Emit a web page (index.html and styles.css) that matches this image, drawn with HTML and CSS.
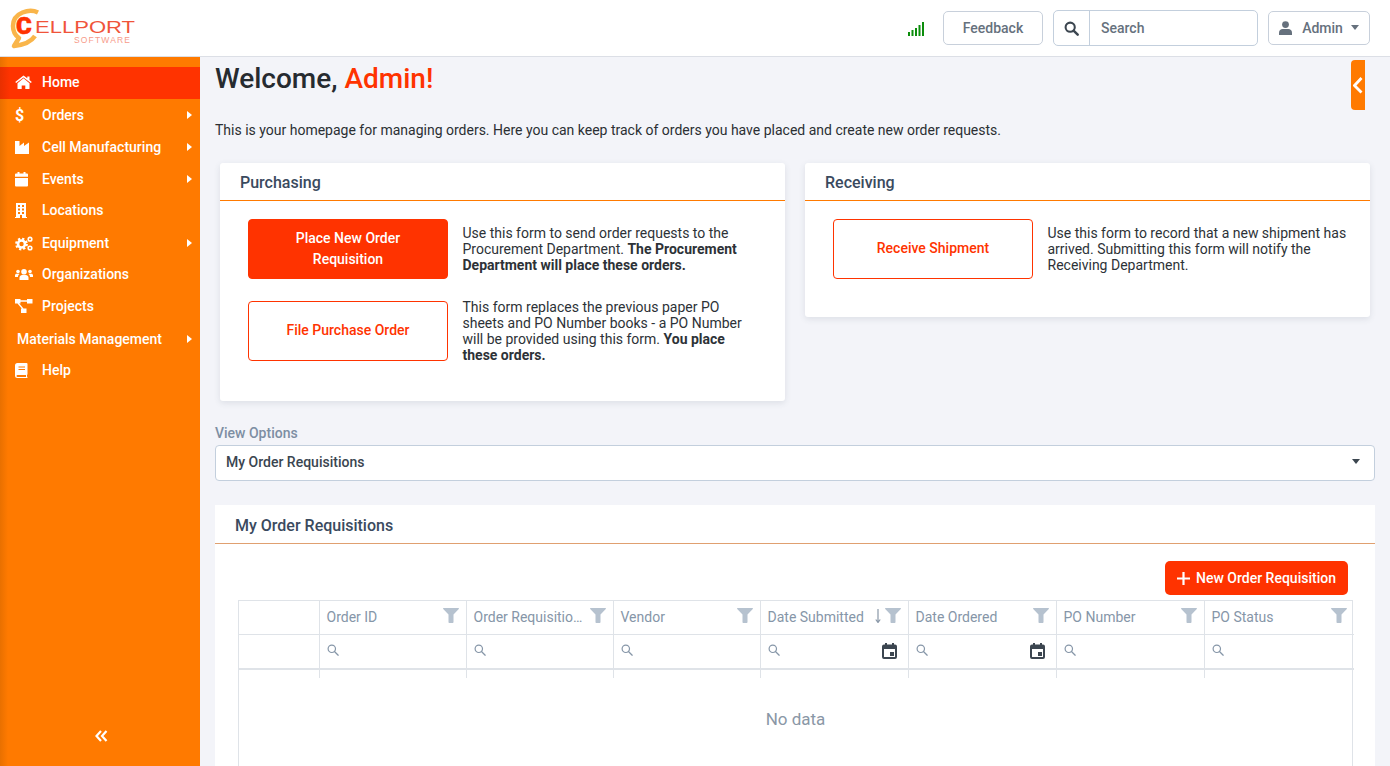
FILE: index.html
```html
<!DOCTYPE html>
<html lang="en">
<head>
<meta charset="utf-8">
<title>Cellport Software</title>
<link rel="stylesheet" href="styles.css">
</head>
<body>
<svg class="defs" aria-hidden="true">
  <defs>
    <symbol id="i-search" viewBox="0 0 16 16"><circle cx="6.600" cy="6.600" r="4.900" fill="none" stroke="currentColor" stroke-width="2.200"/><path d="M10.200 10.200l4.400 4.400" stroke="currentColor" stroke-width="2.600" stroke-linecap="round"/></symbol>
    <symbol id="i-search-thin" viewBox="0 0 13 13"><circle cx="5.200" cy="5.200" r="4" fill="none" stroke="currentColor" stroke-width="1.300"/><path d="M8.100 8.100l4 4" stroke="currentColor" stroke-width="1.400" stroke-linecap="round"/></symbol>
    <symbol id="i-filter" viewBox="0 0 16 15"><path d="M0.600 0h14.800c.5 0 .8.600.4 1L10.500 6.500V14c0 .6-.5 1-1 1h-3c-.6 0-1-.4-1-1V6.500L.2 1C-.2.600.1 0 .6 0z" fill="currentColor"/></symbol>
    <symbol id="i-cal" viewBox="0 0 15 16"><path fill-rule="evenodd" d="M3 0h2v1.500h5V0h2v1.500h1a2 2 0 0 1 2 2V14a2 2 0 0 1-2 2H2a2 2 0 0 1-2-2V3.500a2 2 0 0 1 2-2h1zM2 6v8h11V6zM8 9h4v4H8z" fill="currentColor"/></symbol>
  </defs>
</svg>
<header class="topbar">
  <svg class="logo" viewBox="0 0 135 46" width="135" height="46" role="img" aria-label="Cellport Software">
    <path d="M33 7.500C25 3.500 8 7 8 21c0 6 3 10 6 12l-5 8c9-1 17-4 21-10" fill="none" stroke="#f9b54a" stroke-width="4.500" stroke-linejoin="round"/>
    <text class="logo-c" x="11" y="29">C</text>
    <text class="logo-main" x="30" y="28" textLength="100" lengthAdjust="spacingAndGlyphs">ELLPORT</text>
    <text class="logo-sub" x="69" y="38" textLength="56" lengthAdjust="spacing">SOFTWARE</text>
  </svg>
  <div class="topbar-right">
    <svg class="signal" width="17" height="14" viewBox="0 0 17 14" aria-hidden="true"><path d="M0 10h2v4H0zM3.500 8h2v6h-2zM7 6h2v8H7zM10.500 3h2v11h-2zM14 0h2v14h-2z" fill="#0c8d0c"/></svg>
    <button class="btn-outline feedback">Feedback</button>
    <div class="searchbox">
      <span class="search-icon"><svg width="15" height="15"><use href="#i-search"/></svg></span>
      <span class="search-text">Search</span>
    </div>
    <button class="btn-outline admin">
      <svg class="admin-ico" width="13" height="14" viewBox="0 0 13 14"><circle cx="6.500" cy="3.600" r="3.400" fill="currentColor"/><path d="M0 14v-2.500C0 9.300 1.800 8 3.500 8h6c1.700 0 3.500 1.300 3.500 3.500V14z" fill="currentColor"/></svg>
      <span>Admin</span>
      <i class="caret"></i>
    </button>
  </div>
</header>
<div class="shell">
  <nav class="sidebar">
    <ul class="menu">
      <li class="item active"><svg class="ico" viewBox="0 0 18 15"><path d="M8.500 3.300L2.500 8.200V13.500a.6.600 0 0 0 .6.600h3.600v-3.600h3.600v3.600h3.600a.6.600 0 0 0 .6-.6V8.200z" fill="#fff"/><path d="M16.800 7L14.500 5V1.400h-2.200v1.800L8.500.6.200 7l1 1.100L8.500 2.400l7.300 5.700z" fill="#fff"/></svg><span>Home</span></li>
      <li class="item down"><span class="ico dollar">$</span><span>Orders</span><i class="arrow"></i></li>
      <li class="item"><svg class="ico" viewBox="0 0 18 15"><path d="M0 1h4.500v5L9 2.500V6l5-3.500V14H0z" fill="#fff"/></svg><span>Cell Manufacturing</span><i class="arrow"></i></li>
      <li class="item"><svg class="ico" viewBox="0 0 18 15"><path d="M2.500 0h2v1.500h4V0h2v1.500h1.500a1 1 0 0 1 1 1v2.300H0V2.500a1 1 0 0 1 1-1h1.500zM0 6h13v7.500a1 1 0 0 1-1 1H1a1 1 0 0 1-1-1z" fill="#fff"/></svg><span>Events</span><i class="arrow"></i></li>
      <li class="item up"><svg class="ico" viewBox="0 0 18 15"><path fill-rule="evenodd" d="M1 0h10v14h1v1H0v-1h1zM3 2v2h2V2zm4 0v2h2V2zM3 5.500v2h2v-2zm4 0v2h2v-2zM3 9v2h2V9zm4 0v2h2V9zM5 12v3h2v-3z" fill="#fff"/></svg><span>Locations</span></li>
      <li class="item down"><svg class="ico" viewBox="0 0 18 15"><circle cx="6.500" cy="8" r="3.500" fill="none" stroke="#fff" stroke-width="2.600"/><circle cx="6.500" cy="8" r="5.300" fill="none" stroke="#fff" stroke-width="2.200" stroke-dasharray="2.200 1.960"/><circle cx="15" cy="3.200" r="1.800" fill="none" stroke="#fff" stroke-width="1.600"/><circle cx="15" cy="12" r="1.800" fill="none" stroke="#fff" stroke-width="1.600"/></svg><span>Equipment</span><i class="arrow"></i></li>
      <li class="item up"><svg class="ico" viewBox="0 0 18 15"><circle cx="9" cy="4.800" r="2.800" fill="#fff"/><circle cx="3" cy="4.500" r="1.800" fill="#fff"/><circle cx="15" cy="4.500" r="1.800" fill="#fff"/><path d="M4.500 13v-2.200C4.500 9 6 8 7 8h4c1 0 2.500 1 2.500 2.800V13z" fill="#fff"/><path d="M0 10V8.300C0 7.300.8 6.700 1.500 6.700h2c.4 0 .7.100 1 .4C3.600 7.800 3 8.800 3 10zM18 10V8.300c0-1-.8-1.600-1.500-1.600h-2c-.4 0-.7.100-1 .4.900.7 1.500 1.700 1.500 2.900z" fill="#fff"/></svg><span>Organizations</span></li>
      <li class="item"><svg class="ico" viewBox="0 0 18 15"><path d="M0 0h5.500v4.500H0zM12 0h5.500v4.500H12zM6 9.500h5.500V14H6z" fill="#fff"/><path d="M4 2h9M3 4l5 6" stroke="#fff" stroke-width="1.300" fill="none"/></svg><span>Projects</span></li>
      <li class="item down plain"><span>Materials Management</span><i class="arrow"></i></li>
      <li class="item up"><svg class="ico" viewBox="0 0 18 15"><path fill-rule="evenodd" d="M2.500 0H11.500a1 1 0 0 1 1 1v10c0 .4-.2.700-.5.900v1.700c.3.200.5.500.5.900a.5.500 0 0 1-.5.500H2.500A2.500 2.500 0 0 1 0 12.500v-10A2.500 2.500 0 0 1 2.500 0zM3.500 3.500v1h6.500v-1zM3.500 6v1h6.500V6zM2.500 12a1 1 0 0 0 0 2h8.500v-2z" fill="#fff"/></svg><span>Help</span></li>
    </ul>
    <div class="collapse">
      <svg width="13" height="12" viewBox="0 0 13 12"><path d="M6 1L1.500 6 6 11M11.500 1L7 6l4.500 5" fill="none" stroke="#fff" stroke-width="2.200"/></svg>
    </div>
  </nav>
  <main class="content">
    <h1 class="welcome">Welcome, <em>Admin!</em></h1>
    <p class="intro">This is your homepage for managing orders. Here you can keep track of orders you have placed and create new order requests.</p>
    <div class="cards">
      <section class="card purchasing">
        <h2 class="card-title">Purchasing</h2>
        <div class="action-list">
          <div class="action">
            <button class="btn-action solid">Place New Order Requisition</button>
            <p>Use this form to send order requests to the Procurement Department. <b>The Procurement Department will place these orders.</b></p>
          </div>
          <div class="action">
            <button class="btn-action ghost">File Purchase Order</button>
            <p>This form replaces the previous paper PO sheets and PO Number books - a PO Number will be provided using this form. <b>You place these orders.</b></p>
          </div>
        </div>
      </section>
      <section class="card receiving">
        <h2 class="card-title">Receiving</h2>
        <div class="action-list">
          <div class="action">
            <button class="btn-action ghost">Receive Shipment</button>
            <p>Use this form to record that a new shipment has arrived. Submitting this form will notify the Receiving Department.</p>
          </div>
        </div>
      </section>
    </div>
    <label class="view-label">View Options</label>
    <div class="select"><span>My Order Requisitions</span><i class="caret dark"></i></div>
    <section class="panel">
      <h2 class="panel-title">My Order Requisitions</h2>
      <div class="panel-tools">
        <button class="btn-new"><svg width="13" height="13" viewBox="0 0 13 13"><path d="M6.500 0v13M0 6.500h13" stroke="#fff" stroke-width="2.200"/></svg>New Order Requisition</button>
      </div>
      <div class="grid">
        <div class="hcell"></div>
        <div class="hcell"><span class="hlabel">Order ID</span><svg class="filter"><use href="#i-filter"/></svg></div>
        <div class="hcell"><span class="hlabel">Order Requisitio…</span><svg class="filter"><use href="#i-filter"/></svg></div>
        <div class="hcell"><span class="hlabel">Vendor</span><svg class="filter"><use href="#i-filter"/></svg></div>
        <div class="hcell"><span class="hlabel">Date Submitted</span><svg class="sort" width="6" height="14" viewBox="0 0 6 14"><path d="M3 0v13M.8 10.500L3 13.500l2.200-3" fill="none" stroke="#8a98a8" stroke-width="1.200"/></svg><svg class="filter tight"><use href="#i-filter"/></svg></div>
        <div class="hcell"><span class="hlabel">Date Ordered</span><svg class="filter"><use href="#i-filter"/></svg></div>
        <div class="hcell"><span class="hlabel">PO Number</span><svg class="filter"><use href="#i-filter"/></svg></div>
        <div class="hcell"><span class="hlabel">PO Status</span><svg class="filter"><use href="#i-filter"/></svg></div>

        <div class="fcell"></div>
        <div class="fcell"><svg class="mag"><use href="#i-search-thin"/></svg></div>
        <div class="fcell"><svg class="mag"><use href="#i-search-thin"/></svg></div>
        <div class="fcell"><svg class="mag"><use href="#i-search-thin"/></svg></div>
        <div class="fcell"><svg class="mag"><use href="#i-search-thin"/></svg><svg class="cal"><use href="#i-cal"/></svg></div>
        <div class="fcell"><svg class="mag"><use href="#i-search-thin"/></svg><svg class="cal"><use href="#i-cal"/></svg></div>
        <div class="fcell"><svg class="mag"><use href="#i-search-thin"/></svg></div>
        <div class="fcell"><svg class="mag"><use href="#i-search-thin"/></svg></div>

        <div class="scell"></div><div class="scell"></div><div class="scell"></div><div class="scell"></div>
        <div class="scell"></div><div class="scell"></div><div class="scell"></div><div class="scell"></div>

        <div class="nodata">No data</div>
      </div>
    </section>
    <div class="side-tab"><svg width="10" height="17" viewBox="0 0 10 17"><path d="M8.500 1L1.500 8.500l7 7" fill="none" stroke="#fff" stroke-width="2.800"/></svg></div>
  </main>
</div>
</body>
</html>
```

FILE: styles.css
```css
* { box-sizing: border-box; }
html, body { height: 100%; margin: 0; }
body {
  font-family: Roboto, "Liberation Sans", sans-serif;
  font-size: 14px;
  color: #2b2f33;
  background: #f3f4f9;
  overflow: hidden;
  display: flex;
  flex-direction: column;
}
.defs { width: 0; height: 0; position: absolute; }
button { font-family: inherit; cursor: pointer; }

/* top bar */
.topbar {
  height: 57px;
  flex: none;
  background: #fff;
  border-bottom: 1px solid #dcdfe6;
  display: flex;
  align-items: center;
  justify-content: space-between;
  padding: 0 20px 0 5px;
}
.logo { display: block; }
.logo-c { font: 900 24px Roboto, sans-serif; fill: #ff3300; stroke: #ff3300; stroke-width: .6px; }
.logo-main { font: 400 16.700px "Liberation Sans", sans-serif; fill: #f0543a; }
.logo-sub { font: 400 8.500px "Liberation Sans", sans-serif; fill: #f79b8a; }
.topbar-right { display: flex; align-items: center; }
.signal { margin-right: 18px; margin-top: 1px; }
.btn-outline {
  height: 34px;
  background: #fff;
  border: 1px solid #c8d0db;
  border-radius: 5px;
  color: #66717d;
  font-size: 14px;
  font-weight: 500;
  display: flex;
  align-items: center;
  justify-content: center;
}
.feedback { width: 100px; }
.searchbox {
  width: 205px;
  height: 36px;
  margin: 0 10px;
  border: 1px solid #c3cfdd;
  border-radius: 5px;
  display: flex;
  align-items: center;
  background: #fff;
}
.search-icon {
  width: 36px;
  height: 100%;
  border-right: 1px solid #c3cfdd;
  display: flex;
  align-items: center;
  justify-content: center;
  color: #3c4650;
}
.search-text { padding-left: 11px; color: #66717d; font-weight: 500; }
.admin { width: 102px; }
.admin-ico { margin-right: 10px; }
.caret {
  display: inline-block;
  width: 0;
  height: 0;
  border-left: 4px solid transparent;
  border-right: 4px solid transparent;
  border-top: 5px solid #66717d;
  margin-left: 8px;
  margin-top: -2px;
}
.caret.dark { border-top-color: #3c4650; }

/* layout */
.shell { flex: 1; min-height: 0; display: flex; position: relative; }

/* sidebar */
.sidebar {
  width: 200px;
  flex: none;
  background: linear-gradient(90deg, #e87000 0, #ff7a00 8px);
  display: flex;
  flex-direction: column;
  padding-top: 10px;
  color: #fff;
}
.menu { list-style: none; margin: 0; padding: 0; }
.item {
  display: flex;
  align-items: center;
  height: 32px;
  padding: 0 8px 2px 15px;
  font-weight: 500;
  font-size: 14px;
  color: #fff;
}
.item.down { margin-top: 1px; }
.item.up { margin-top: -1px; }
.item.active { background: linear-gradient(90deg, #e83000 0, #ff3300 10px); }
.item.plain { padding-left: 17px; }
.ico { width: 18px; height: 15px; margin-right: 9px; flex: none; text-align: left; }
.dollar { font-size: 16px; font-weight: 700; line-height: 15px; }
.arrow {
  margin-left: auto;
  width: 0;
  height: 0;
  border-top: 4px solid transparent;
  border-bottom: 4px solid transparent;
  border-left: 5px solid #fff;
}
.collapse { margin-top: auto; padding: 0 0 24px 95px; line-height: 0; }

/* content */
.content { flex: 1; min-width: 0; padding: 0 15px; position: relative; }
.welcome { margin: 4px 0 0; font-size: 28px; line-height: 36px; font-weight: 500; color: #262b30; }
.welcome em { font-style: normal; color: #ff3300; }
.intro { margin: 23px 0 0; line-height: 20px; font-size: 14px; color: #2b2f33; }
.cards { display: flex; align-items: flex-start; gap: 20px; padding: 0 5px; margin-top: 23px; }
.card {
  flex: 1;
  background: #fff;
  border-radius: 3px;
  box-shadow: 0 2px 6px rgba(60, 70, 90, .12);
}
.purchasing { height: 238px; }
.receiving { height: 154px; }
.card-title {
  margin: 0;
  height: 38px;
  padding-left: 20px;
  border-bottom: 1px solid #ff7a00;
  font-size: 16px;
  font-weight: 500;
  line-height: 39px;
  color: #3a4a5e;
}
.action-list { display: flex; flex-direction: column; gap: 20px; padding: 18px 22px 0 28px; }
.action { display: flex; gap: 14.500px; align-items: center; }
.action p { margin: 0; flex: 1; line-height: 16px; font-size: 14px; color: #2d3237; }
.action b { font-weight: 700; }
.btn-action {
  width: 200px;
  height: 60px;
  flex: none;
  border-radius: 4px;
  font-size: 14px;
  font-weight: 500;
  line-height: 21px;
  padding: 0 30px;
}
.solid { background: #ff3300; border: 1px solid #ff3300; color: #fff; }
.ghost { background: #fff; border: 1px solid #ff3300; color: #ff3300; padding: 0 10px 2px; }
.view-label { display: block; margin-top: 24px; font-size: 14px; font-weight: 500; line-height: 16px; color: #7d8ea3; }
.select {
  margin-top: 4px;
  height: 36px;
  background: #fff;
  border: 1px solid #c3cfdd;
  border-radius: 4px;
  display: flex;
  align-items: center;
  justify-content: space-between;
  padding: 0 14px 2px 10px;
  font-weight: 500;
  color: #3a4550;
}
.panel { margin-top: 24px; background: #fff; height: 300px; }
.panel-title {
  margin: 0;
  height: 39px;
  line-height: 41px;
  padding-left: 20px;
  border-bottom: 1px solid #e0a070;
  font-size: 16px;
  font-weight: 500;
  color: #3a4a5e;
}
.panel-tools { display: flex; justify-content: flex-end; padding: 17px 27px 5px 0; }
.btn-new {
  width: 183px;
  height: 34px;
  border: 0;
  border-radius: 5px;
  background: #ff3300;
  color: #fff;
  font-size: 14px;
  font-weight: 500;
  display: flex;
  align-items: center;
  justify-content: center;
  gap: 6px;
}
.grid {
  margin: 0 22px 0 23px;
  display: grid;
  grid-template-columns: 81px 147px 147px 147px 148px 148px 148px 149px;
  grid-template-rows: 34px 35px 8px auto;
  border-top: 1px solid #dfe3e8;
  border-left: 1px solid #dfe3e8;
  border-right: 1px solid #dfe3e8;
  height: 180px;
  color: #8696a8;
}
.hcell, .fcell, .scell { border-right: 1px solid #dfe3e8; }
.hcell:nth-child(8), .fcell:nth-child(16), .scell:nth-child(24) { border-right: 0; }
.hcell {
  border-bottom: 1px solid #dfe3e8;
  display: flex;
  align-items: center;
  padding: 0 7px 2px 6.500px;
  font-size: 14px;
}
.hlabel { flex: 1; min-width: 0; white-space: nowrap; }
.filter { width: 16px; height: 15px; color: #b6c2cf; margin-top: -2px; flex: none; }
.filter.tight { margin-left: 2px; }
.sort { margin-top: -1px; flex: none; margin-right: 2px; }
.fcell {
  border-bottom: 2px solid #dfe3e8;
  display: flex;
  justify-content: space-between;
  padding: 9px 11px 0 6.500px;
}
.mag { width: 12px; height: 12px; color: #8696a8; flex: none; }
.cal { width: 15px; height: 16px; color: #3c4650; flex: none; margin-top: -1px; }
.nodata {
  grid-column: 1 / -1;
  text-align: center;
  font-size: 17px;
  line-height: 20px;
  padding: 31px 2px 0 0;
  color: #8a97a6;
}
.side-tab {
  position: absolute;
  top: 3px;
  right: 25px;
  width: 14px;
  height: 50px;
  background: #ff7a00;
  border-radius: 4px 0 0 4px;
  display: flex;
  align-items: center;
  justify-content: center;
  z-index: 2;
}
```
